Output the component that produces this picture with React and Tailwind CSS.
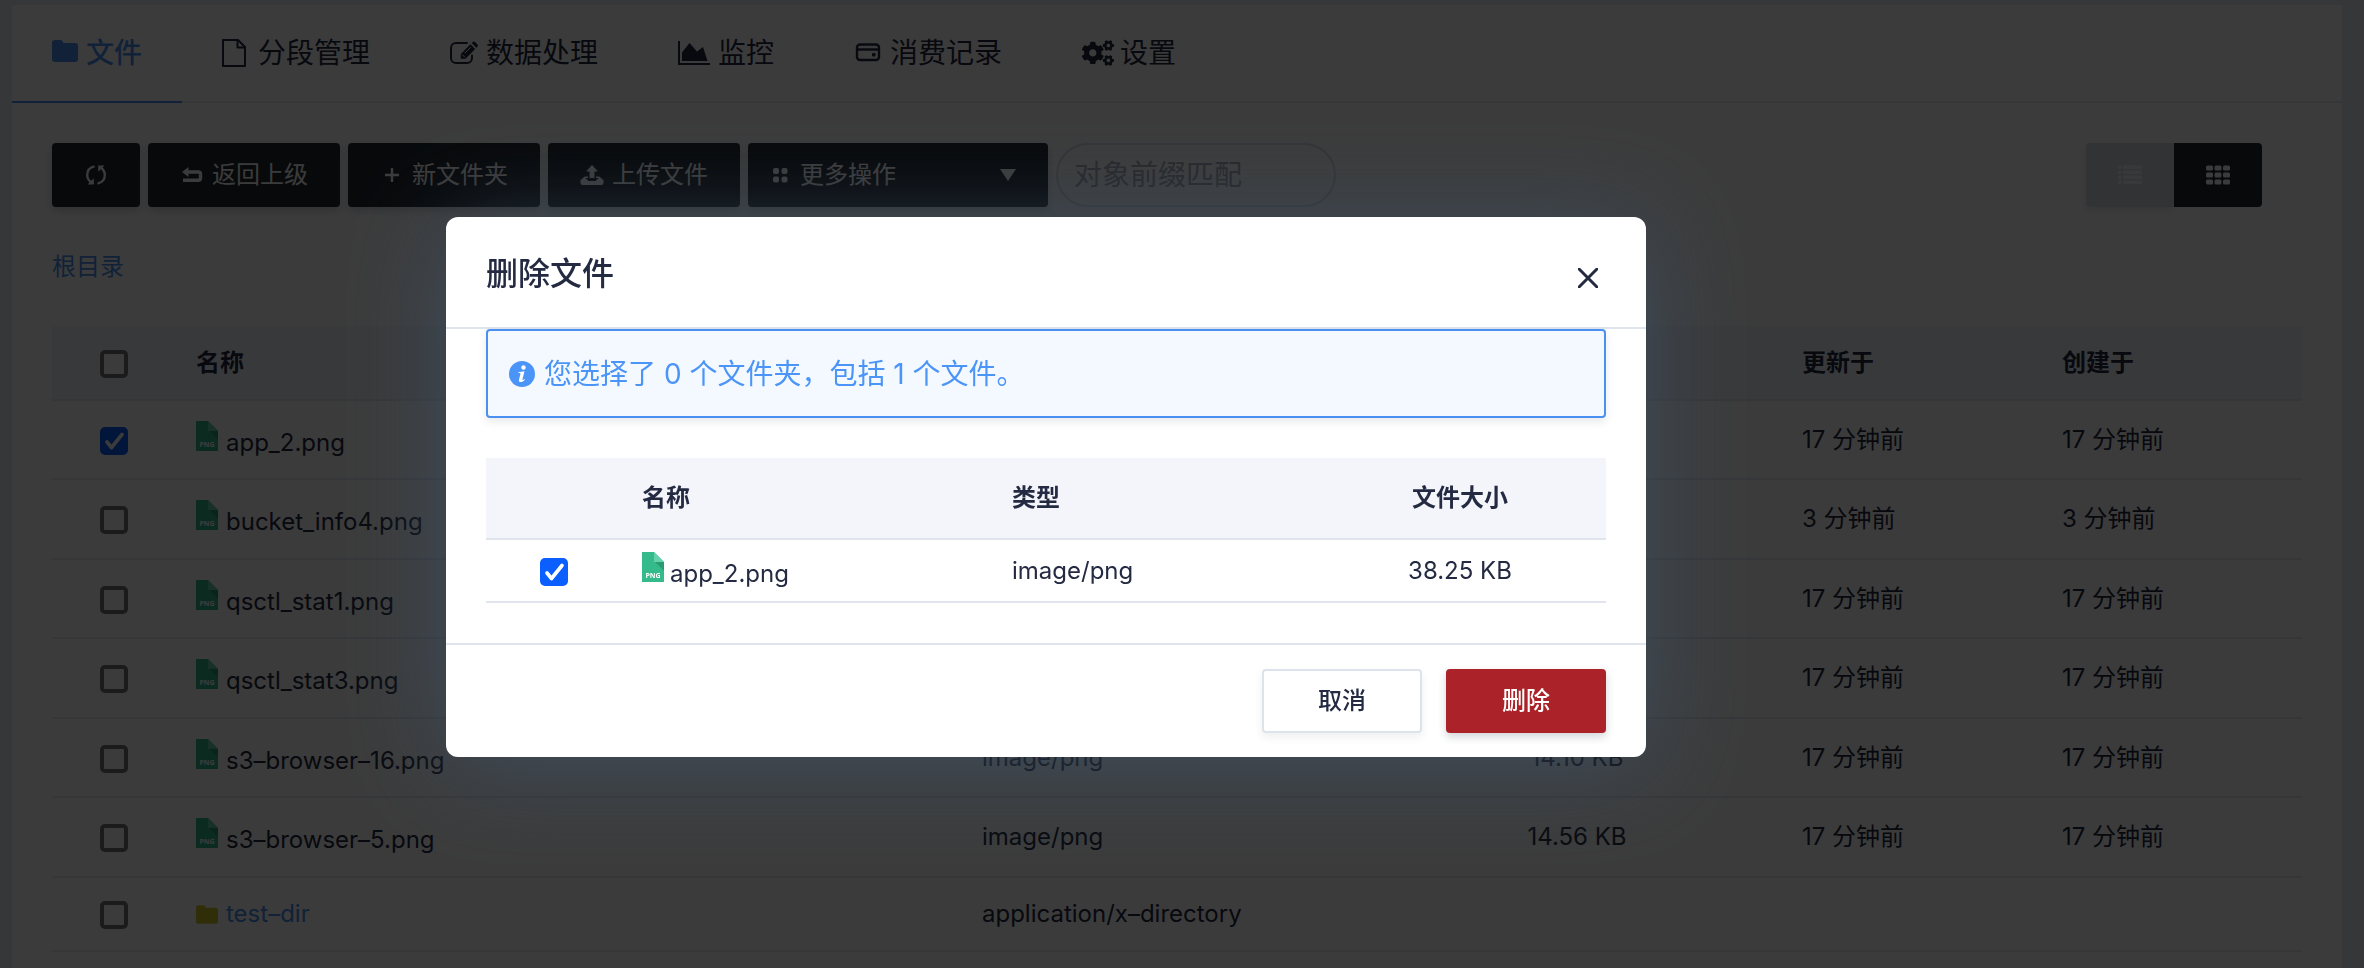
import React from "react";
import { FaCogs } from "react-icons/fa";

function FolderIcon({ className }) {
  return (
    <svg viewBox="0 0 26 22" className={className} fill="currentColor" aria-hidden="true">
      <path d="M3 0h5.5a3 3 0 0 1 2.6 2.4V3H23a3 3 0 0 1 3 3v13a3 3 0 0 1-3 3H3a3 3 0 0 1-3-3V3a3 3 0 0 1 3-3Z" />
    </svg>
  );
}

function PageIcon() {
  return (
    <svg viewBox="0 0 24 28" className="h-7 w-6" fill="none" stroke="currentColor" strokeWidth="2" strokeLinejoin="round" aria-hidden="true">
      <path d="M1 1h15l7 7v19H1Z" />
      <path d="M15.500 1v7.500H23" />
    </svg>
  );
}

function EditIcon() {
  return (
    <svg viewBox="0 0 28 24" className="h-6 w-7" aria-hidden="true">
      <path d="M17 2H6a5 5 0 0 0-5 5v10a5 5 0 0 0 5 5h11a5 5 0 0 0 5-5v-2.500" fill="none" stroke="currentColor" strokeWidth="2" strokeLinecap="round" />
      <path d="m20.500 3.300 4.700 4.700-9.700 9.700H10.800V13Z" fill="currentColor" />
      <path d="m21.700 2.100 1-1a1.700 1.700 0 0 1 2.400 0l2.300 2.300a1.700 1.700 0 0 1 0 2.400l-1 1Z" fill="currentColor" />
      <path d="m14.800 12.200 6-6M12.300 13.700l2.500 2.500" stroke="#fff" strokeWidth="1" fill="none" />
    </svg>
  );
}

function AreaIcon() {
  return (
    <svg viewBox="0 0 32 24" className="h-6 w-8" fill="currentColor" aria-hidden="true">
      <path d="M0 0h2v22h30v2H0Z" />
      <path d="M4 20v-8.500L11.500 2 19 10.500 25 6l4.500 14Z" />
    </svg>
  );
}

function WalletIcon() {
  return (
    <svg viewBox="0 0 28 20" className="h-5 w-7" fill="none" stroke="currentColor" strokeWidth="2.400" aria-hidden="true">
      <rect x="3" y="1.500" width="22" height="15.500" rx="3" />
      <path d="M3 6.500h22" />
      <rect x="18" y="10" width="3.500" height="3.500" rx="1" fill="currentColor" stroke="none" />
    </svg>
  );
}

function RefreshIcon() {
  return (
    <svg viewBox="0 0 20 20" className="size-5" fill="none" stroke="currentColor" strokeWidth="2.400" aria-hidden="true">
      <path d="M8.500 1.400C3.500 2.500 1.200 6 1.200 10c0 3 1.400 5.400 3.600 7" />
      <path d="M11.500 18.600c5-1.100 7.300-4.600 7.300-8.600 0-3-1.400-5.400-3.600-7" />
      <path d="M1.500 19.500h6.300v-6.300Z" fill="currentColor" stroke="none" />
      <path d="M18.500.5h-6.300v6.300Z" fill="currentColor" stroke="none" />
    </svg>
  );
}

function BackIcon() {
  return (
    <svg viewBox="0 0 24 20" className="h-5 w-6" aria-hidden="true">
      <path d="M7 7h11.500a2 2 0 0 1 2 2v4.300a2 2 0 0 1-2 2H3" fill="none" stroke="currentColor" strokeWidth="3.400" />
      <path d="M8.500 2v10L2 7Z" fill="currentColor" />
    </svg>
  );
}

function PlusIcon() {
  return (
    <svg viewBox="0 0 24 20" className="h-5 w-6" aria-hidden="true">
      <path d="M12 3v14M5 10h14" stroke="currentColor" strokeWidth="2.400" />
    </svg>
  );
}

function UploadIcon() {
  return (
    <svg viewBox="0 0 24 20" className="h-5 w-6" fill="currentColor" aria-hidden="true">
      <path d="m12 0 6 6.500h-3.500V13h-5V6.500H6Z" />
      <path d="M4.800 11.500H8v1.500H5.500L8.300 16h7.400l2.800-3H16v-1.500h3.200l4.300 3.500v3a2 2 0 0 1-2 2h-19a2 2 0 0 1-2-2v-3Z" />
    </svg>
  );
}

function DotsIcon() {
  return (
    <svg viewBox="0 0 16 16" className="size-4" fill="currentColor" aria-hidden="true">
      <rect x="1" y="1" width="6" height="6" rx="2" />
      <rect x="9.500" y="1" width="6" height="6" rx="2" />
      <rect x="1" y="9.500" width="6" height="6" rx="2" />
      <rect x="9.500" y="9.500" width="6" height="6" rx="2" />
    </svg>
  );
}

function ListIcon() {
  return (
    <svg viewBox="0 0 24 20" className="h-5 w-6" fill="currentColor" aria-hidden="true">
      {[0, 5, 10, 15].map((y) => (
        <g key={y}>
          <rect x="0" y={y + 0.5} width="3.500" height="3.500" rx="1" />
          <rect x="5" y={y + 0.5} width="19" height="3.500" rx="1" />
        </g>
      ))}
    </svg>
  );
}

function GridIcon() {
  return (
    <svg viewBox="0 0 24 20" className="h-5 w-6" fill="currentColor" aria-hidden="true">
      {[0, 7, 14].map((y) =>
        [0, 8.500, 17].map((x) => <rect key={`${x}-${y}`} x={x} y={y + 0.5} width="7" height="5" rx="1.500" />)
      )}
    </svg>
  );
}

function PngIcon() {
  return (
    <svg viewBox="0 0 22 30" className="h-[30px] w-[22px] shrink-0" aria-hidden="true">
      <path d="M0 0h12l10 10v20H0Z" fill="#34ba8b" />
      <path d="M13 10h9v9Z" fill="#2a9c74" />
      <path d="M12 0l10 10H12Z" fill="#63d3ac" />
      <text x="11" y="25.500" textAnchor="middle" fontSize="7" fontWeight="700" fontFamily="Open Sans, sans-serif" fill="#fff">PNG</text>
    </svg>
  );
}

function Checkbox({ label, checked = false }) {
  return (
    <span className="inline-grid size-7 align-middle">
      <input
        type="checkbox"
        aria-label={label}
        defaultChecked={checked}
        className="peer col-start-1 row-start-1 size-7 appearance-none rounded-[5px] border-4 border-[#767676] bg-white checked:border-[#0b5fff] checked:bg-[#0b5fff]"
      />
      <svg viewBox="0 0 28 28" className="pointer-events-none col-start-1 row-start-1 hidden size-7 peer-checked:block" fill="none" stroke="#fff" strokeWidth="3.600" strokeLinecap="round" strokeLinejoin="round" aria-hidden="true">
        <path d="m7 15 4.500 5.500L22 7.500" />
      </svg>
    </span>
  );
}

const tabs = [
  { label: "文件", icon: <FolderIcon className="mb-1 h-[22px] w-[26px]" />, box: "w-[26px]", active: true },
  { label: "分段管理", icon: <PageIcon />, box: "w-7" },
  { label: "数据处理", icon: <EditIcon />, box: "w-7" },
  { label: "监控", icon: <AreaIcon />, box: "w-8" },
  { label: "消费记录", icon: <WalletIcon />, box: "w-7" },
  { label: "设置", icon: <FaCogs className="size-8 shrink-0" aria-hidden="true" />, box: "w-[30px]" },
];

const files = [
  { name: "app_2.png", type: "image/png", size: "38.25 KB", updated: "17 分钟前", created: "17 分钟前", checked: true },
  { name: "bucket_info4.png", type: "image/png", size: "21.30 KB", updated: "3 分钟前", created: "3 分钟前" },
  { name: "qsctl_stat1.png", type: "image/png", size: "17.52 KB", updated: "17 分钟前", created: "17 分钟前" },
  { name: "qsctl_stat3.png", type: "image/png", size: "18.04 KB", updated: "17 分钟前", created: "17 分钟前" },
  { name: "s3–browser–16.png", type: "image/png", size: "14.10 KB", updated: "17 分钟前", created: "17 分钟前" },
  { name: "s3–browser–5.png", type: "image/png", size: "14.56 KB", updated: "17 分钟前", created: "17 分钟前" },
  { name: "test–dir", type: "application/x–directory", dir: true },
];

const toolButton = "flex h-16 items-center justify-center rounded-[4px] bg-[#1f272f] text-white shadow-[0_4px_8px_rgba(36,46,66,0.2)]";

function Tabs() {
  return (
    <nav className="flex h-[98px] border-b-2 border-[#e3e8f1]">
      {tabs.map((t) => (
        <a
          key={t.label}
          href="#"
          className={
            "-mb-[2px] flex items-center gap-2 border-b-2 px-10 text-[28px] leading-10 " +
            (t.active ? "border-[#4a90f0] font-medium text-[#4a90f0]" : "border-transparent text-[#242a42]")
          }
        >
          <span className={"flex justify-start " + t.box}>{t.icon}</span>
          {t.label}
        </a>
      ))}
    </nav>
  );
}

function Toolbar() {
  return (
    <div className="flex items-center justify-between px-10 pt-10">
      <div className="flex gap-2">
        <button type="button" aria-label="刷新" className={toolButton + " w-[88px]"}><RefreshIcon /></button>
        <button type="button" className={toolButton + " w-48 gap-2"}><BackIcon />返回上级</button>
        <button type="button" className={toolButton + " w-48 gap-2"}><PlusIcon />新文件夹</button>
        <button type="button" className={toolButton + " w-48 gap-2"}><UploadIcon />上传文件</button>
        <button type="button" aria-haspopup="menu" className={toolButton + " w-[300px] gap-3 px-6"}>
          <DotsIcon />
          <span className="flex-1 text-left">更多操作</span>
          <svg viewBox="0 0 16 12" className="mr-2 h-3 w-4" fill="currentColor" aria-hidden="true"><path d="M0 0h16L8 12Z" /></svg>
        </button>
        <input
          type="text"
          aria-label="对象前缀匹配"
          placeholder="对象前缀匹配"
          className="h-16 w-[280px] rounded-full border-2 border-[#d8dee5] bg-white px-4 text-[28px] placeholder:text-[#a5aab4]"
        />
      </div>
      <div className="mr-10 flex">
        <button type="button" aria-label="列表" className="flex h-16 w-[88px] items-center justify-center rounded-l-[4px] bg-[#d8dde2] text-[#f2f4f6] shadow-[0_4px_8px_rgba(36,46,66,0.1)]"><ListIcon /></button>
        <button type="button" aria-label="网格" className="flex h-16 w-[88px] items-center justify-center rounded-r-[4px] bg-[#1f272f] text-white"><GridIcon /></button>
      </div>
    </div>
  );
}

function FileName({ file, gap = "gap-2" }) {
  if (file.dir) {
    return (
      <a href="#" className="flex items-center gap-2 text-[#4a90f0]">
        <FolderIcon className="h-[19px] w-[22px] text-[#d1c52a]" />
        {file.name}
      </a>
    );
  }
  return (
    <span className={"flex items-end pt-[2px] " + gap}>
      <span className="pb-[10px]"><PngIcon /></span>
      <span>{file.name}</span>
    </span>
  );
}

function FileTable() {
  return (
    <div className="px-10">
      <table className="w-full table-fixed text-left">
        <colgroup>
          <col className="w-[124px]" />
          <col />
          <col className="w-[410px]" />
          <col className="w-[410px]" />
          <col className="w-[260px]" />
          <col className="w-[260px]" />
        </colgroup>
        <thead>
          <tr className="h-[74px] border-b-2 border-[#e3e8f1] bg-[#f3f5fa]">
            <th className="text-center"><Checkbox label="全选" /></th>
            <th className="px-5 font-semibold">名称</th>
            <th className="px-5 font-semibold">类型</th>
            <th className="px-5 text-center font-semibold">文件大小</th>
            <th className="px-5 font-semibold">更新于</th>
            <th className="px-5 font-semibold">创建于</th>
          </tr>
        </thead>
        <tbody>
          {files.map((f) => (
            <tr key={f.name} className={"border-b-2 border-[#e3e8f1] " + (f.dir ? "h-[74px]" : "odd:h-[79px] even:h-[80px]")}>
              <td className="text-center"><Checkbox label={f.name} checked={f.checked} /></td>
              <td className="px-5"><FileName file={f} /></td>
              <td className="px-5">{f.type}</td>
              <td className="px-5 text-center">{f.size}</td>
              <td className="px-5">{f.updated}</td>
              <td className="px-5">{f.created}</td>
            </tr>
          ))}
        </tbody>
      </table>
    </div>
  );
}

function DeleteDialog() {
  return (
    <div className="fixed inset-0 flex items-start bg-black/77 pt-[217px] pl-[446px]">
      <section
        role="dialog"
        aria-modal="true"
        aria-labelledby="dialog-title"
        className="w-[1200px] rounded-xl bg-white shadow-[0_8px_100px_rgba(64,85,108,0.7)]"
      >
        <header className="flex h-28 items-center justify-between border-b-2 border-[#e0e4ec] px-10">
          <h2 id="dialog-title" className="pt-1 text-[32px] leading-10 font-medium">删除文件</h2>
          <button type="button" aria-label="关闭" className="p-2 pt-5">
            <svg viewBox="0 0 20 20" className="size-5" stroke="currentColor" strokeWidth="3" strokeLinecap="round" aria-hidden="true">
              <path d="M1 1l18 18M19 1 1 19" />
            </svg>
          </button>
        </header>
        <div className="px-10 pb-10">
          <p className="flex h-[89px] items-center gap-2 rounded-[4px] border-2 border-[#4a90f0] bg-[#f4f9ff] px-5 text-[28px] text-[#4a95f7] shadow-[0_4px_8px_rgba(36,46,66,0.1)]">
            <svg viewBox="0 0 28 28" className="size-7" aria-hidden="true">
              <circle cx="14" cy="14" r="13" fill="currentColor" />
              <circle cx="15.500" cy="7.500" r="2.200" fill="#fff" />
              <path d="M10.500 12.200l6-.9-2 7.700c-.3 1.300.3 1.300 2 .1l.4.600c-1.500 1.700-3 2.500-4.300 2.400-1.600-.1-1.900-1.200-1.500-2.900l1.300-4.900c.2-.9 0-1.200-2-1.300Z" fill="#fff" />
            </svg>
            您选择了 0 个文件夹，包括 1 个文件。
          </p>
          <table className="mt-10 w-full table-fixed text-left">
            <colgroup>
              <col className="w-[136px]" />
              <col />
              <col className="w-[322px]" />
              <col className="w-[292px]" />
            </colgroup>
            <thead>
              <tr className="h-[81px] border-b-2 border-[#e0e4ec] bg-[#f3f5fa]">
                <th />
                <th className="px-5 font-semibold">名称</th>
                <th className="px-5 font-semibold">类型</th>
                <th className="px-5 text-center font-semibold">文件大小</th>
              </tr>
            </thead>
            <tbody>
              <tr className="h-[63px] border-b-2 border-[#e0e4ec]">
                <td className="text-center"><Checkbox label="app_2.png" checked /></td>
                <td className="px-5"><FileName file={files[0]} gap="gap-[6px]" /></td>
                <td className="px-5">image/png</td>
                <td className="px-5 text-center">38.25 KB</td>
              </tr>
            </tbody>
          </table>
        </div>
        <footer className="flex justify-end gap-6 border-t-2 border-[#e0e4ec] px-10 py-6">
          <button type="button" className="h-16 w-40 rounded-[4px] border-2 border-[#dde3ea] bg-white font-medium shadow-[0_4px_8px_rgba(36,46,66,0.08)]">取消</button>
          <button type="button" className="h-16 w-40 rounded-[4px] bg-[#ab2328] font-medium text-white shadow-[0_4px_8px_rgba(36,46,66,0.2)]">删除</button>
        </footer>
      </section>
    </div>
  );
}

export default function App() {
  return (
    <div className="h-screen overflow-hidden bg-[#eaeef6] pt-[5px] pr-[22px] pl-3 font-['Inter','Noto_Sans_CJK_SC',sans-serif] text-[24px] leading-9 text-[#242a42]">
      <main className="min-h-screen bg-white">
        <Tabs />
        <Toolbar />
        <p className="px-10 pt-[42px] pb-[41px]"><a href="#" className="text-[#4a90f0]">根目录</a></p>
        <FileTable />
      </main>
      <DeleteDialog />
    </div>
  );
}
